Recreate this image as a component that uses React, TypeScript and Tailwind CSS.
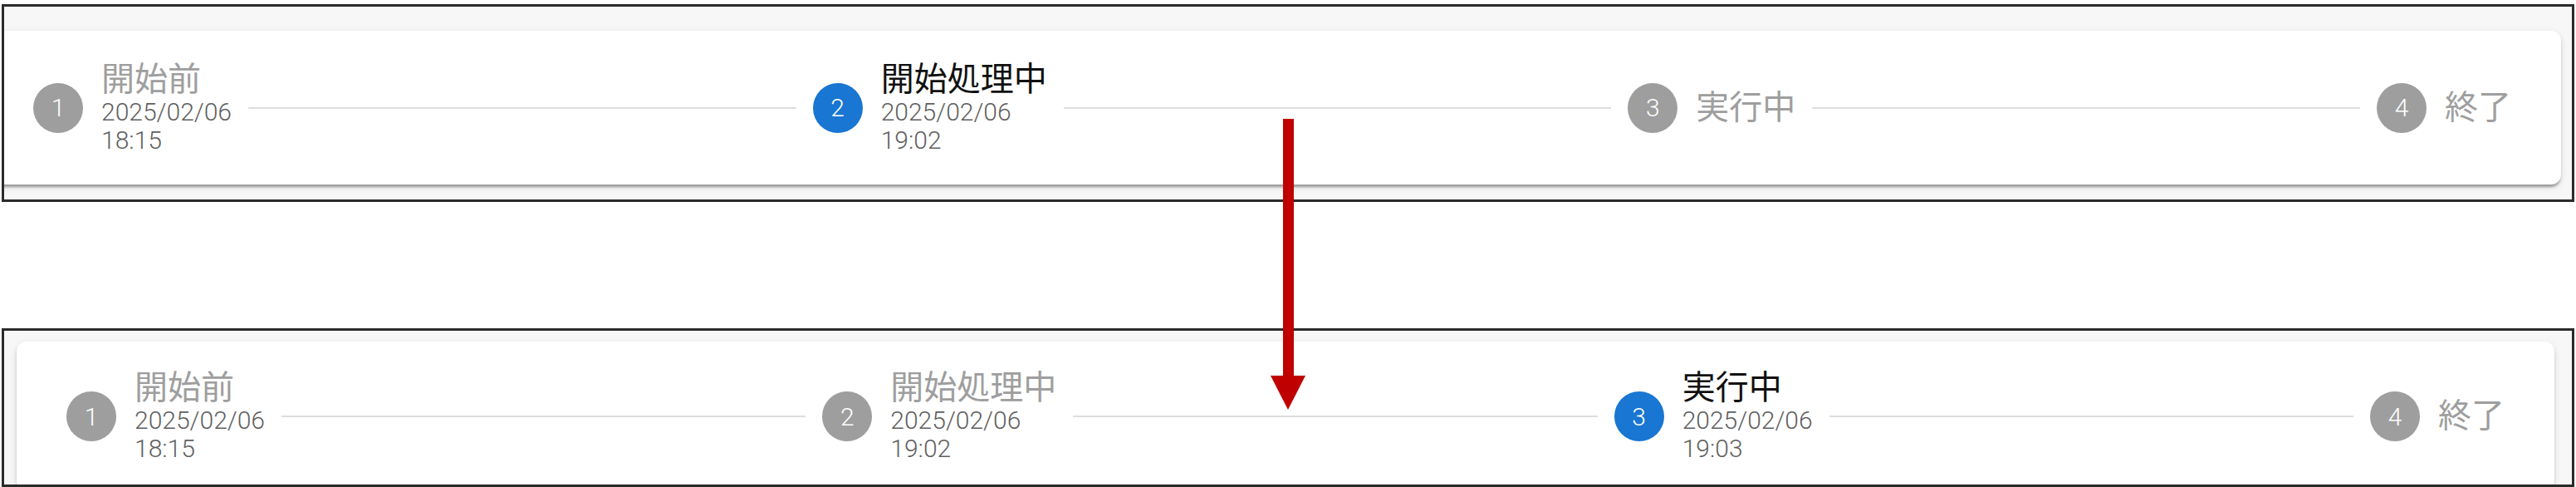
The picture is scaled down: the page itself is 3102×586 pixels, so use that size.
import { Fragment } from "react";

type Step = {
    label: string;
    date?: string;
    time?: string;
};

const before: Step[] = [
    { label: "開始前", date: "2025/02/06", time: "18:15" },
    { label: "開始処理中", date: "2025/02/06", time: "19:02" },
    { label: "実行中" },
    { label: "終了" },
];

const after: Step[] = [
    { label: "開始前", date: "2025/02/06", time: "18:15" },
    { label: "開始処理中", date: "2025/02/06", time: "19:02" },
    { label: "実行中", date: "2025/02/06", time: "19:03" },
    { label: "終了" },
];

function StepItem({ index, step, active }: { index: number; step: Step; active: boolean }) {
    return (
        <div className="flex items-center px-[20px]">
            <div
                className={`flex h-[60px] w-[60px] shrink-0 items-center justify-center rounded-full text-[30px] font-light text-white ${
                    active ? "bg-[#1976d2]" : "bg-[#9e9e9e]"
                }`}
            >
                {index}
            </div>
            <div className="flex flex-col pl-[22px]">
                <span className={`text-[40px] leading-[44px] ${active ? "text-[#111111]" : "text-[#9e9e9e]"}`}>
                    {step.label}
                </span>
                {step.date && (
                    <>
                        <span className="text-[30px] font-light leading-[34px] text-[#5f5f5f]">{step.date}</span>
                        <span className="text-[30px] font-light leading-[34px] text-[#5f5f5f]">{step.time}</span>
                    </>
                )}
            </div>
        </div>
    );
}

function Stepper({ steps, activeStep }: { steps: Step[]; activeStep: number }) {
    return (
        <div className="flex w-full items-center">
            {steps.map((step, i) => (
                <Fragment key={step.label}>
                    {i > 0 && <div className="h-[2px] flex-1 bg-[#dddddd]" />}
                    <StepItem index={i + 1} step={step} active={i === activeStep} />
                </Fragment>
            ))}
        </div>
    );
}

const cardShadow =
    "shadow-[0_5px_3px_-2px_rgba(0,0,0,0.2),0_3px_3px_0_rgba(0,0,0,0.14),0_3px_8px_0_rgba(0,0,0,0.12)]";

export default function App() {
    return (
        <div className="relative h-[586px] w-[3102px] overflow-hidden bg-white font-['Roboto','Noto_Sans_CJK_JP',sans-serif]">
            {/* before */}
            <div className="mx-[2px] mt-[5px] h-[238px] overflow-hidden border-[3px] border-[#2b2b2b] bg-[#f7f7f7] pt-[29px]">
                <div className={`-ml-[25px] mr-[13px] flex h-[185px] items-center rounded-[12px] bg-white px-[40px] ${cardShadow}`}>
                    <Stepper steps={before} activeStep={1} />
                </div>
            </div>

            {/* after */}
            <div className="mx-[2px] mt-[152px] h-[191px] overflow-hidden border-[3px] border-[#2b2b2b] bg-[#f7f7f7] pt-[13px]">
                <div className={`ml-[15px] mr-[21px] flex h-[180px] items-center rounded-[12px] bg-white px-[40px] ${cardShadow}`}>
                    <Stepper steps={after} activeStep={2} />
                </div>
            </div>

            {/* transition arrow */}
            <svg
                className="absolute left-[1530px] top-[143px]"
                width="42"
                height="350"
                viewBox="0 0 42 350"
            >
                <rect x="15" y="0" width="13" height="310" fill="#c00000" />
                <polygon points="0,309 42,309 21,350" fill="#c00000" />
            </svg>
        </div>
    );
}
